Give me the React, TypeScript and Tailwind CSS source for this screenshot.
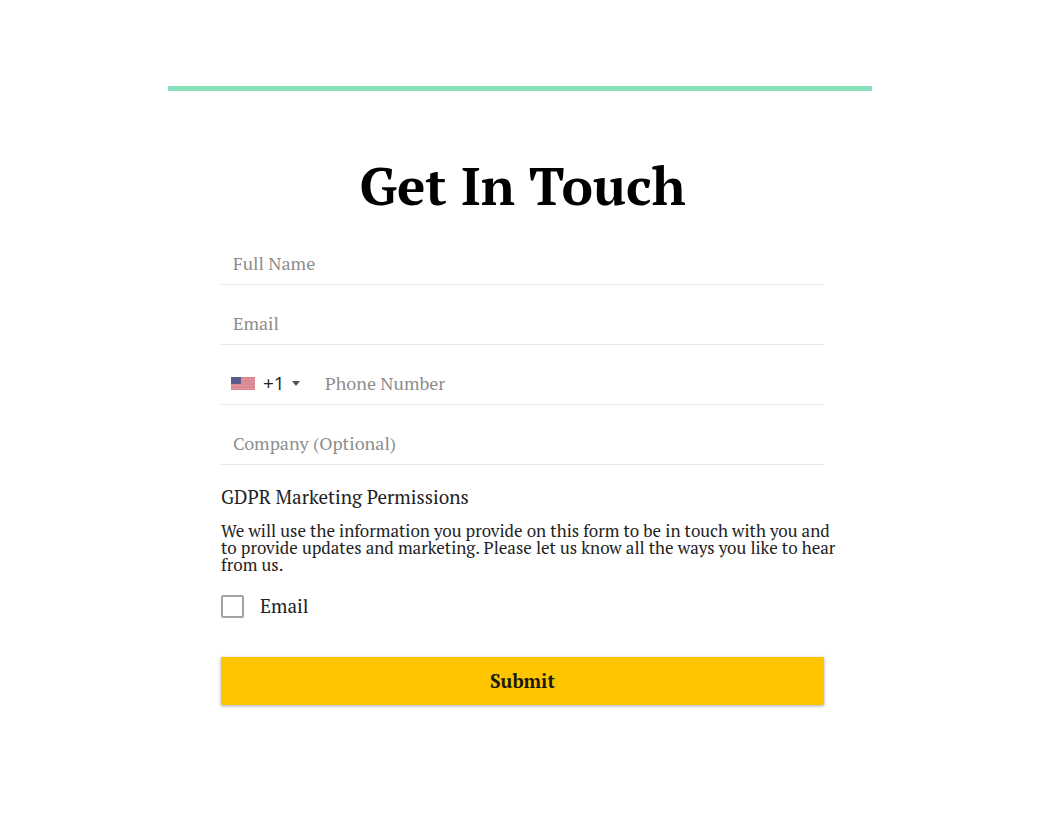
import { useState } from "react";

interface FieldProps {
  name: string;
  label: string;
  type?: string;
}

const inputClasses =
  "h-[42px] min-w-0 flex-1 bg-transparent pl-3 text-[18px] text-[#222222] outline-none placeholder:text-[#8e8e8e] placeholder:opacity-100";

function Field({ name, label, type = "text" }: FieldProps) {
  return (
    <div className="flex h-[60px] items-end border-b border-[#e6e6e6]">
      <input
        type={type}
        name={name}
        aria-label={label}
        placeholder={label}
        className={inputClasses}
      />
    </div>
  );
}

function UsFlag() {
  return (
    <svg
      viewBox="0 0 24 13"
      shapeRendering="crispEdges"
      className="h-[13px] w-6 shrink-0"
      aria-hidden="true"
    >
      <rect width="24" height="13" fill="#d98791" />
      {[2, 5, 8, 11].map((y) => (
        <rect key={y} y={y} width="24" height="1" fill="#dc949d" />
      ))}
      <rect width="10" height="7" fill="#5d5b8b" />
    </svg>
  );
}

function PhoneField() {
  const [code, setCode] = useState("+1");

  return (
    <div className="flex h-[60px] items-end border-b border-[#e6e6e6]">
      <div className="flex h-[42px] items-center pl-[10px]">
        <UsFlag />
        <div className="relative ml-2 flex items-center">
          <select
            name="countryCode"
            aria-label="Country code"
            value={code}
            onChange={(e) => setCode(e.target.value)}
            className="h-10 w-[50px] appearance-none bg-transparent font-['Open_Sans',sans-serif] text-[19px] text-[#222222] outline-none"
          >
            <option value="+1">+1</option>
          </select>
          <svg
            viewBox="0 0 8 5"
            className="pointer-events-none absolute right-[13px] h-[5px] w-2"
            aria-hidden="true"
          >
            <path d="M0 0h8L4 5z" fill="#555555" />
          </svg>
        </div>
      </div>
      <input
        type="tel"
        name="phone"
        aria-label="Phone Number"
        placeholder="Phone Number"
        className={inputClasses}
      />
    </div>
  );
}

export default function App() {
  return (
    <main className="min-h-screen bg-white px-4 py-[86px] font-['PT_Serif','Liberation_Serif',serif] text-[#222222]">
      <section className="mx-auto max-w-[704px] border-t-5 border-[#88e0b8] pt-16 pr-12 pb-8 pl-[53px]">
        <h1 className="text-center text-[53px] leading-[60px] font-bold text-black">
          Get In Touch
        </h1>

        <form className="mt-[10px]" onSubmit={(e) => e.preventDefault()}>
          <Field name="fullName" label="Full Name" />
          <Field name="email" label="Email" type="email" />
          <PhoneField />
          <Field name="company" label="Company (Optional)" />

          <fieldset>
            <legend className="pt-5 text-[19px] leading-6">
              GDPR Marketing Permissions
            </legend>
            <p className="mt-[13px] -mr-4 text-[17px] leading-[17px]">
              We will use the information you provide on this form to be in
              touch with you and to provide updates and marketing. Please let us
              know all the ways you like to hear from us.
            </p>
            <label className="mt-[21px] flex w-fit items-center gap-4 text-[19px] leading-6">
              <input
                type="checkbox"
                name="gdprEmail"
                className="size-[23px] appearance-none rounded-xs border-2 border-[#a3a3a3] bg-white checked:bg-[#ffc600]"
              />
              Email
            </label>
          </fieldset>

          <button
            type="submit"
            className="mt-[39px] h-12 w-full bg-[#ffc600] text-[19px] font-bold text-[#1c1a10] shadow-[0_1px_3px_rgba(0,0,0,0.35)]"
          >
            Submit
          </button>
        </form>
      </section>
    </main>
  );
}
